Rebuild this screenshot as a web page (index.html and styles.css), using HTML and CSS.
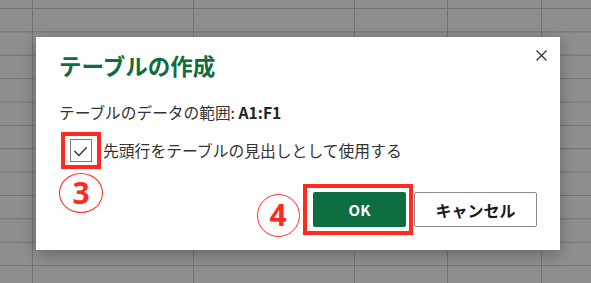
FILE: index.html
```html
<!DOCTYPE html>
<html lang="ja">
<head>
<meta charset="utf-8">
<title>テーブルの作成</title>
<link rel="stylesheet" href="styles.css">
</head>
<body>
<div class="sheet">
  <div class="dialog">
    <button class="close" aria-label="閉じる">
      <svg width="11" height="11" viewBox="0 0 11 11"><path d="M0.5 0.5L10.5 10.5M10.5 0.5L0.5 10.5" stroke="#333" stroke-width="1.3" fill="none"/></svg>
    </button>
    <h1 class="title">テーブルの作成</h1>
    <p class="range">テーブルのデータの範囲: <b>A1:F1</b></p>
    <label class="check-row">
      <span class="check-wrap">
        <span class="checkbox">
          <svg width="22" height="22" viewBox="0 0 22 22"><path d="M4.3 11L9 15.5L16.7 7.3" stroke="#333" stroke-width="1.4" fill="none"/></svg>
        </span>
      </span>
      <span class="check-label">先頭行をテーブルの見出しとして使用する</span>
    </label>
    <div class="actions">
      <button class="btn btn-ok">OK</button>
      <button class="btn btn-cancel">キャンセル</button>
    </div>
    <span class="step step-3">3</span>
    <span class="step step-4">4</span>
  </div>
</div>
</body>
</html>
```

FILE: styles.css
```css
html, body {
  margin: 0;
  padding: 0;
}
body {
  width: 591px;
  height: 283px;
  overflow: hidden;
  font-family: "Noto Sans CJK JP", "Noto Sans", sans-serif;
}
.sheet {
  width: 591px;
  height: 283px;
  box-sizing: border-box;
  padding: 37px 0 0 36px;
  background-color: #8e8d8f;
  background-image:
    linear-gradient(#737274, #737274),
    linear-gradient(#737274, #737274),
    linear-gradient(#737274, #737274),
    linear-gradient(#737274, #737274),
    linear-gradient(#737274, #737274),
    linear-gradient(to bottom, #737274 0, #737274 1px, transparent 1px);
  background-size: 1px 100%, 1px 100%, 1px 100%, 1px 100%, 1px 100%, 100% 23.38px;
  background-position: 32px 0, 193px 0, 354px 0, 447px 0, 541px 0, 0 8px;
  background-repeat: no-repeat, no-repeat, no-repeat, no-repeat, no-repeat, repeat;
}
.dialog {
  position: relative;
  width: 524px;
  height: 213px;
  box-sizing: border-box;
  padding: 13px 23px 0 23px;
  background: #fff;
  box-shadow: 0 4px 14px rgba(0, 0, 0, 0.28);
  color: #333;
}
.close {
  position: absolute;
  top: 13px;
  right: 13px;
  width: 11px;
  height: 11px;
  padding: 0;
  border: 0;
  background: none;
  display: block;
}
.close svg { display: block; }
.title {
  margin: 0;
  font-size: 22.5px;
  line-height: 30px;
  font-weight: 700;
  color: #126b3d;
}
.range {
  margin: 22px 0 0 0;
  font-size: 15.7px;
  line-height: 22px;
  color: #333;
}
.range b {
  font-weight: 700;
  color: #222;
}
.check-row {
  display: flex;
  align-items: center;
  margin-top: 15px;
  height: 23px;
}
.check-wrap {
  position: relative;
  margin-left: 11px;
  display: block;
}
.check-wrap::after {
  content: "";
  position: absolute;
  left: -9px;
  right: -9px;
  top: -7.5px;
  bottom: -6.5px;
  border: 4px solid #ff2b20;
}
.checkbox {
  display: block;
  width: 22px;
  height: 23px;
  box-sizing: border-box;
  border: 1px solid #7d7d7d;
}
.checkbox svg {
  display: block;
  margin: 0 0 0 -1px;
}
.check-label {
  margin-left: 11px;
  font-size: 15.8px;
  line-height: 23px;
  color: #333;
}
.actions {
  display: flex;
  justify-content: flex-end;
  gap: 8px;
  margin-top: 30px;
}
.btn {
  height: 35px;
  box-sizing: border-box;
  border-radius: 2px;
  font-family: "Noto Sans CJK JP", "Noto Sans", sans-serif;
  font-weight: 700;
  padding: 0;
}
.btn-ok {
  position: relative;
  width: 93px;
  border: 0;
  background: #0f6d42;
  color: #fff;
  font-size: 15px;
}
.btn-ok::after {
  content: "";
  position: absolute;
  left: -10px;
  right: -7px;
  top: -8px;
  bottom: -8px;
  border: 4px solid #ff2b20;
}
.btn-cancel {
  width: 123px;
  border: 1px solid #8a8a8a;
  background: #fff;
  color: #1a1a1a;
  font-size: 16px;
}
.step {
  position: absolute;
  display: flex;
  align-items: center;
  justify-content: center;
  box-sizing: border-box;
  border: 1px solid #ff2b20;
  border-radius: 50%;
  color: #ff2b20;
  font-family: "Noto Sans", sans-serif;
  font-weight: 700;
  font-size: 30px;
  line-height: 1;
}
.step-3 {
  left: 23px;
  top: 135.5px;
  width: 44px;
  height: 40px;
}
.step-4 {
  left: 220.5px;
  top: 156.5px;
  width: 43px;
  height: 43px;
}
```
